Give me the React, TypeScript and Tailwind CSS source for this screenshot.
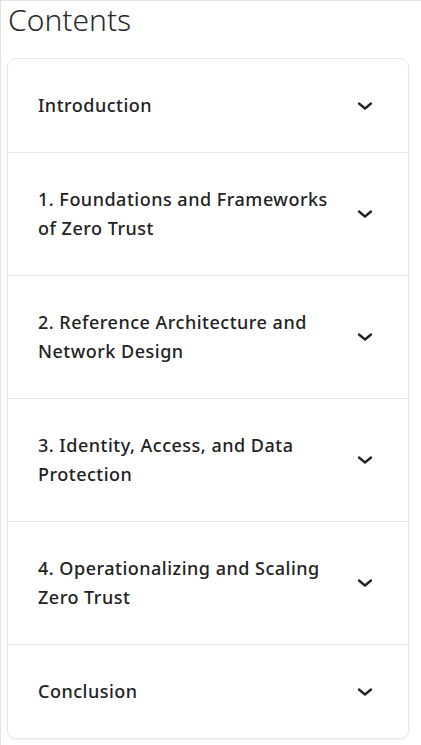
import React from "react";

const sections = [
  "Introduction",
  "1. Foundations and Frameworks of Zero Trust",
  "2. Reference Architecture and Network Design",
  "3. Identity, Access, and Data Protection",
  "4. Operationalizing and Scaling Zero Trust",
  "Conclusion",
];

function Chevron() {
  return (
    <svg width="16" height="10" viewBox="0 0 16 10" className="shrink-0">
      <polyline
        points="2,2.5 8,7.5 14,2.5"
        fill="none"
        stroke="#222"
        strokeWidth="2.3"
        strokeLinecap="round"
        strokeLinejoin="round"
      />
    </svg>
  );
}

export default function App() {
  return (
    <div
      className="min-h-[745px] w-[421px] border-l border-t border-[#e2e2e2] bg-white pl-[6px] pr-[12px]"
      style={{ fontFamily: "'Noto Sans', sans-serif" }}
    >
      <h2 className="pl-[1px] text-[30px] font-light leading-[38px] text-[#2a2a2a]">
        Contents
      </h2>
      <div className="mt-[19px] overflow-hidden rounded-[9px] border border-[#e6e6e6] shadow-[0_1px_2px_rgba(0,0,0,0.05)]">
        {sections.map((title, i) => (
          <div
            key={title}
            className={`flex items-center justify-between py-8 pl-[30px] pr-[35px] ${
              i > 0 ? "border-t border-[#e6e6e6]" : ""
            }`}
          >
            <span className="max-w-[300px] text-[18px] font-medium leading-[29px] tracking-[0.5px] text-[#222]">
              {title}
            </span>
            <Chevron />
          </div>
        ))}
      </div>
    </div>
  );
}
